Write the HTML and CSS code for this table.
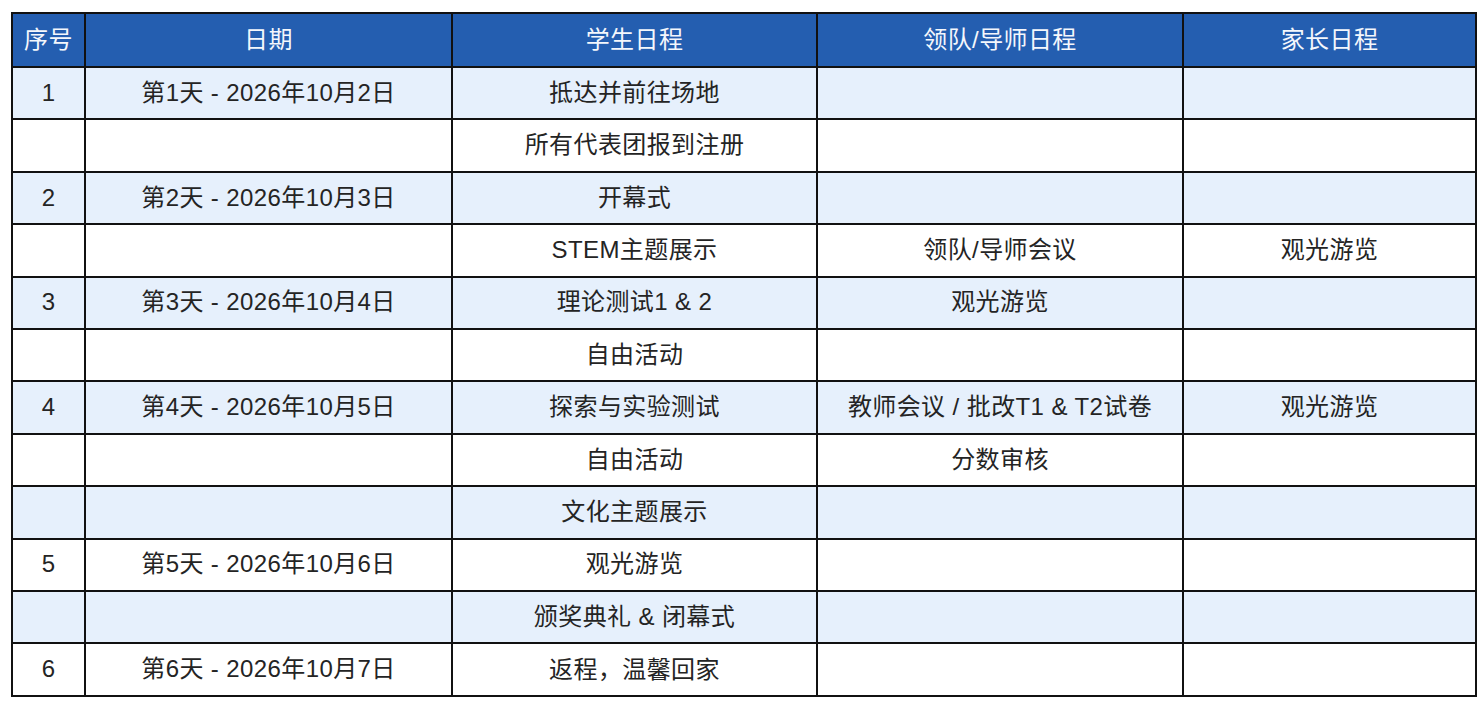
FILE: index.html
```html
<!DOCTYPE html>
<html lang="zh-CN">
<head>
<meta charset="utf-8">
<link rel="stylesheet" href="styles.css">
</head>
<body>
<table class="schedule">
  <colgroup>
    <col class="c-no"><col class="c-date"><col class="c-stu"><col class="c-lead"><col class="c-par">
  </colgroup>
  <thead>
    <tr><th>序号</th><th>日期</th><th>学生日程</th><th>领队/导师日程</th><th>家长日程</th></tr>
  </thead>
  <tbody>
    <tr class="alt"><td>1</td><td>第1天 - 2026年10月2日</td><td>抵达并前往场地</td><td></td><td></td></tr>
    <tr><td></td><td></td><td>所有代表团报到注册</td><td></td><td></td></tr>
    <tr class="alt"><td>2</td><td>第2天 - 2026年10月3日</td><td>开幕式</td><td></td><td></td></tr>
    <tr><td></td><td></td><td>STEM主题展示</td><td>领队/导师会议</td><td>观光游览</td></tr>
    <tr class="alt"><td>3</td><td>第3天 - 2026年10月4日</td><td>理论测试1 &amp; 2</td><td>观光游览</td><td></td></tr>
    <tr><td></td><td></td><td>自由活动</td><td></td><td></td></tr>
    <tr class="alt"><td>4</td><td>第4天 - 2026年10月5日</td><td>探索与实验测试</td><td>教师会议 / 批改T1 &amp; T2试卷</td><td>观光游览</td></tr>
    <tr><td></td><td></td><td>自由活动</td><td>分数审核</td><td></td></tr>
    <tr class="alt"><td></td><td></td><td>文化主题展示</td><td></td><td></td></tr>
    <tr><td>5</td><td>第5天 - 2026年10月6日</td><td>观光游览</td><td></td><td></td></tr>
    <tr class="alt"><td></td><td></td><td>颁奖典礼 &amp; 闭幕式</td><td></td><td></td></tr>
    <tr><td>6</td><td>第6天 - 2026年10月7日</td><td>返程<span class="punct">，</span>温馨回家</td><td></td><td></td></tr>
  </tbody>
</table>
</body>
</html>
```
FILE: styles.css
```css
html, body {
  background: #ffffff;
}
body {
  margin: 12px 0 0 11px;
  font-family: "Liberation Sans", "Noto Sans CJK SC", sans-serif;
  color: #242424;
}
.schedule {
  border-collapse: collapse;
  table-layout: fixed;
  width: 1464px;
  font-size: 24px;
  letter-spacing: 0.4px;
}
.c-no { width: 73px; }
.c-date { width: 367px; }
.c-stu { width: 365px; }
.c-lead { width: 366px; }
.c-par { width: 293px; }
.schedule th,
.schedule td {
  border: 2px solid #111111;
  text-align: center;
  vertical-align: middle;
  padding: 0;
  line-height: 1.2;
}
.schedule th {
  background: #245eb0;
  color: #f4f7fc;
  font-weight: normal;
  height: 52px;
}
.schedule td {
  height: 50.4px;
}
.schedule tr.alt td {
  background: #e6f0fc;
}
.punct {
  font-family: "Noto Sans CJK TC", sans-serif;
}
```
